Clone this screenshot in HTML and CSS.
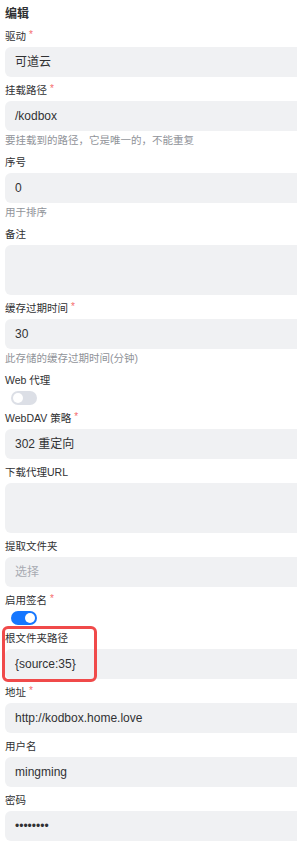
FILE: index.html
```html
<!DOCTYPE html>
<html lang="zh-CN">
<head>
  <meta charset="UTF-8">
  <meta name="viewport" content="width=device-width, initial-scale=1.0">
  <title>编辑</title>
  <link rel="stylesheet" href="styles.css">
</head>
<body>
  <h2 class="titulo">编辑</h2>

  <div class="campo">
    <label>驱动<span class="obrigatorio">*</span></label>
    <div class="entrada">可道云</div>
  </div>

  <div class="campo">
    <label>挂载路径<span class="obrigatorio">*</span></label>
    <div class="entrada">/kodbox</div>
    <p class="ajuda">要挂载到的路径，它是唯一的，不能重复</p>
  </div>

  <div class="campo">
    <label>序号</label>
    <div class="entrada">0</div>
    <p class="ajuda">用于排序</p>
  </div>

  <div class="campo">
    <label>备注</label>
    <div class="entrada area"></div>
  </div>

  <div class="campo">
    <label>缓存过期时间<span class="obrigatorio">*</span></label>
    <div class="entrada">30</div>
    <p class="ajuda">此存储的缓存过期时间(分钟)</p>
  </div>

  <div class="campo">
    <label>Web 代理</label>
    <div class="chave"></div>
  </div>

  <div class="campo">
    <label>WebDAV 策略<span class="obrigatorio">*</span></label>
    <div class="entrada">302 重定向</div>
  </div>

  <div class="campo">
    <label>下载代理URL</label>
    <div class="entrada area"></div>
  </div>

  <div class="campo">
    <label>提取文件夹</label>
    <div class="entrada vazio">选择</div>
  </div>

  <div class="campo">
    <label>启用签名<span class="obrigatorio">*</span></label>
    <div class="chave ligada"></div>
  </div>

  <div class="campo destaque">
    <label>根文件夹路径</label>
    <div class="entrada">{source:35}</div>
    <div class="moldura"></div>
  </div>

  <div class="campo">
    <label>地址<span class="obrigatorio">*</span></label>
    <div class="entrada">http://kodbox.home.love</div>
  </div>

  <div class="campo">
    <label>用户名</label>
    <div class="entrada">mingming</div>
  </div>

  <div class="campo">
    <label>密码</label>
    <div class="entrada senha">&bull;&bull;&bull;&bull;&bull;&bull;&bull;&bull;</div>
  </div>
</body>
</html>
```

FILE: styles.css
```css
html {
  overflow: hidden;
}

body {
  margin: 0;
  padding: 5px 0 0 5px;
  background: #ffffff;
  color: #303133;
  font-family: "Liberation Sans", "Noto Sans CJK SC", sans-serif;
  overflow: hidden;
}

.titulo {
  margin: 0;
  font-size: 12px;
  line-height: 18px;
  font-weight: bold;
}

.campo {
  margin-top: 4px;
  position: relative;
}

label {
  display: block;
  height: 18px;
  font-size: 10.5px;
  line-height: 18px;
  margin-bottom: 2px;
}

.obrigatorio {
  color: #f56c6c;
  font-size: 10px;
  line-height: 0;
  margin-left: 3px;
  position: relative;
  top: -2px;
}

.entrada {
  background: #f0f1f3;
  border-radius: 6px 0 0 6px;
  height: 30px;
  line-height: 30px;
  padding-left: 10px;
  font-size: 12px;
  color: #303133;
}

.area {
  height: 50px;
}

.vazio {
  color: #a8abb2;
}

.senha {
  font-size: 12px;
}

.ajuda {
  margin: 0;
  font-size: 10.5px;
  line-height: 18px;
  color: #909399;
}

.chave {
  margin-left: 6px;
  width: 26px;
  height: 14px;
  margin-bottom: 1px;
  border-radius: 7px;
  background: #dcdfe6;
  position: relative;
}

.chave::after {
  content: "";
  position: absolute;
  top: 2px;
  left: 2px;
  width: 10px;
  height: 10px;
  border-radius: 50%;
  background: #ffffff;
}

.ligada {
  background: #1677ff;
}

.ligada::after {
  left: 14px;
}

.moldura {
  position: absolute;
  top: -3px;
  left: -3px;
  width: 95px;
  height: 56px;
  box-sizing: border-box;
  border: 3px solid #f04a4a;
  border-radius: 6px;
}
```
